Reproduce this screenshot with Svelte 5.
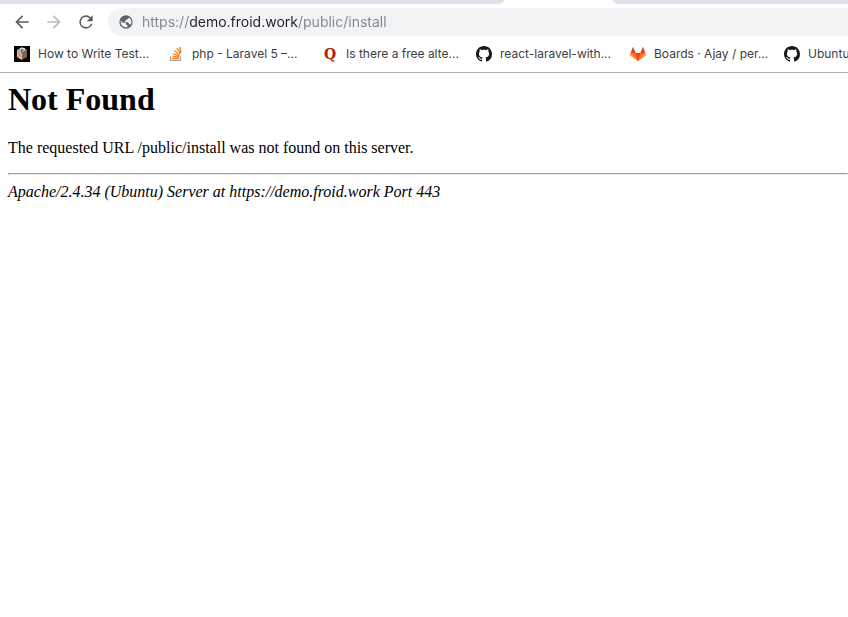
<script>
    let url = $state('https://demo.froid.work/public/install');

    const bookmarks = [
        { icon: 'box', title: 'How to Write Test...' },
        { icon: 'stack', title: 'php - Laravel 5 –...' },
        { icon: 'quora', title: 'Is there a free alte...' },
        { icon: 'github', title: 'react-laravel-with...' },
        { icon: 'gitlab', title: 'Boards · Ajay / per...' },
        { icon: 'github', title: 'Ubuntu' }
    ];
</script>

<header>
    <div class="tabs">
        <div class="tab left"></div>
        <div class="active"></div>
        <div class="tab right"></div>
    </div>

    <div class="toolbar">
        <button aria-label="Back">
            <svg viewBox="0 0 24 24" fill="#5a5d61"><path d="M20 11H7.83l5.59-5.59L12 4l-8 8 8 8 1.41-1.41L7.83 13H20v-2z"/></svg>
        </button>
        <button aria-label="Forward">
            <svg viewBox="0 0 24 24" fill="#bbbcbe"><path d="M12 4l-1.41 1.41L16.17 11H4v2h12.17l-5.58 5.59L12 20l8-8z"/></svg>
        </button>
        <button aria-label="Reload">
            <svg viewBox="0 0 24 24" fill="#5a5d61"><path d="M17.65 6.35A7.96 7.96 0 0 0 12 4a8 8 0 1 0 7.73 10h-2.08A6 6 0 1 1 12 6c1.66 0 3.14.69 4.22 1.78L13 11h7V4l-2.35 2.35z"/></svg>
        </button>
        <label class="omnibox">
            <svg viewBox="0 0 24 24" fill="#5f6368"><path d="M12 2a10 10 0 1 0 0 20 10 10 0 0 0 0-20zM4 12c0-.6.1-1.2.2-1.7L7 13h3c1.5 0 2 .8 2 2v1h2v3.7c-.6.2-1.3.3-2 .3a8 8 0 0 1-8-8zm14.8 4.2c-.5-.9-1.2-1.2-2.3-1.2-.5-1.9-1.5-2.5-3.5-2.5h-3V10h2.5V8H15V6h2.2A8 8 0 0 1 18.8 16.2z"/></svg>
            <input type="text" aria-label="Address" spellcheck="false" bind:value={url}>
        </label>
    </div>

    <nav>
        {#each bookmarks as bookmark}
            <a href="#{bookmark.icon}">
                {#if bookmark.icon === 'box'}
                    <svg viewBox="0 0 16 16">
                        <path fill="#000" d="M0 0h16v16H0z"/>
                        <path fill="#b9aaa0" d="M8 1l5 3-5 3-5-3z"/>
                        <path fill="#d9cdc3" d="M3 4l5 3v7l-5-3z"/>
                        <path fill="#86604f" d="M13 4L8 7v7l5-3z"/>
                        <path fill="#777b83" d="M7 2h2v6H7z"/>
                        <path fill="#ddd" d="M6 2h5v1H6z"/>
                        <path fill="none" stroke="#d8672f" d="M4 6l3 5M6 8l-2 3"/>
                    </svg>
                {:else if bookmark.icon === 'stack'}
                    <svg viewBox="0 0 16 16" fill="none">
                        <path stroke="#9b9da0" stroke-width="1.2" d="M2.5 10.5v4h10v-4"/>
                        <path stroke="#f48024" stroke-width="1.3" d="M4 12.5h7M4.2 10.2l6.8 1M4.9 7.5l6.4 2.7M6.3 4.7l5.5 4.3M8.8 2.2l3.8 5.5M11.8 1l1.2 6"/>
                    </svg>
                {:else if bookmark.icon === 'quora'}
                    <span class="quora" aria-hidden="true">Q</span>
                {:else if bookmark.icon === 'github'}
                    <svg viewBox="0 0 16 16" fill="#191717"><path fill-rule="evenodd" d="M8 0C3.58 0 0 3.58 0 8c0 3.54 2.29 6.53 5.47 7.59.4.07.55-.17.55-.38 0-.19-.01-.82-.01-1.49-2.01.37-2.53-.49-2.69-.94-.09-.23-.48-.94-.82-1.13-.28-.15-.68-.52-.01-.53.63-.01 1.08.58 1.23.82.72 1.21 1.87.87 2.33.66.07-.52.28-.87.51-1.07-1.78-.2-3.64-.89-3.64-3.95 0-.87.31-1.59.82-2.15-.08-.2-.36-1.02.08-2.12 0 0 .67-.21 2.2.82.64-.18 1.32-.27 2-.27s1.36.09 2 .27c1.53-1.04 2.2-.82 2.2-.82.44 1.1.16 1.92.08 2.12.51.56.82 1.27.82 2.15 0 3.07-1.87 3.75-3.65 3.95.29.25.54.73.54 1.48 0 1.07-.01 1.93-.01 2.2 0 .21.15.46.55.38A8.01 8.01 0 0 0 16 8c0-4.42-3.58-8-8-8z"/></svg>
                {:else}
                    <svg viewBox="0 0 16 16">
                        <path fill="#fc6d26" d="M0 9l3-8 2.6 6h4.8L13 1l3 8-8 6z"/>
                        <path fill="#e24329" d="M3 1l2.6 6H.8zM13 1l2.2 6h-4.8zM5.6 7h4.8L8 15z"/>
                        <path fill="#fca326" d="M.8 7L0 9.4 8 15zM15.2 7l.8 2.4L8 15z"/>
                    </svg>
                {/if}
                <span>{bookmark.title}</span>
            </a>
        {/each}
    </nav>
</header>

<main>
    <h1>Not Found</h1>
    <p>The requested URL /public/install was not found on this server.</p>
    <hr>
    <address>Apache/2.4.34 (Ubuntu) Server at https://demo.froid.work Port 443</address>
</main>

<style>
    :global(body) {
        margin: 0;
        background: #fff;
        overflow-x: hidden;
    }

    header {
        border-bottom: 1px solid #b0b0b0;
        font-family: Inter, sans-serif;
    }

    .tabs {
        display: flex;
        height: 4px;
    }

    .tab {
        background: #dee1e9;
    }

    .left {
        width: 504px;
        border-bottom-right-radius: 6px 4px;
    }

    .active {
        width: 109px;
    }

    .right {
        flex: 1;
        border-bottom-left-radius: 6px 4px;
    }

    .toolbar {
        display: flex;
        align-items: center;
        padding: 4px 0 0 12px;
    }

    button {
        display: flex;
        width: 20px;
        margin-right: 12px;
        padding: 0;
        border: 0;
        background: none;
    }

    button svg {
        width: 20px;
        height: 20px;
    }

    .omnibox {
        display: flex;
        flex: 1;
        align-items: center;
        gap: 8px;
        height: 28px;
        padding-left: 10px;
        border-radius: 14px 0 0 14px;
        background: #f1f3f4;
    }

    .omnibox svg {
        width: 16px;
        height: 16px;
    }

    input {
        flex: 1;
        min-width: 0;
        padding: 0;
        border: 0;
        outline: 0;
        font: 14px/20px Inter, sans-serif;
        color: transparent;
        caret-color: #202124;
        /* the host is darker than the scheme and path */
        background: linear-gradient(90deg, #80868b 47px, #202124 47px 156px, #80868b 156px);
        -webkit-background-clip: text;
        background-clip: text;
    }

    nav {
        display: flex;
        height: 36px;
        padding-left: 14px;
        overflow: hidden;
    }

    nav a {
        display: flex;
        flex: none;
        align-items: center;
        gap: 8px;
        width: 154px;
        color: #3c4043;
        font-size: 12px;
        line-height: 16px;
        text-decoration: none;
        white-space: nowrap;
    }

    nav svg,
    .quora {
        flex: none;
        width: 16px;
        height: 16px;
    }

    .quora {
        color: #b31b0b;
        font: bold 14px/16px "DejaVu Serif", serif;
        text-align: center;
    }

    main {
        padding: 8px 0 8px 8px;
        font: 16px/18px "Liberation Serif", serif;
        color: #000;
    }

    h1 {
        margin: 0 0 21px;
        font-size: 32px;
        line-height: 37px;
    }

    p {
        margin: 0 0 16px;
    }

    hr {
        margin: 0 0 8px;
    }
</style>
